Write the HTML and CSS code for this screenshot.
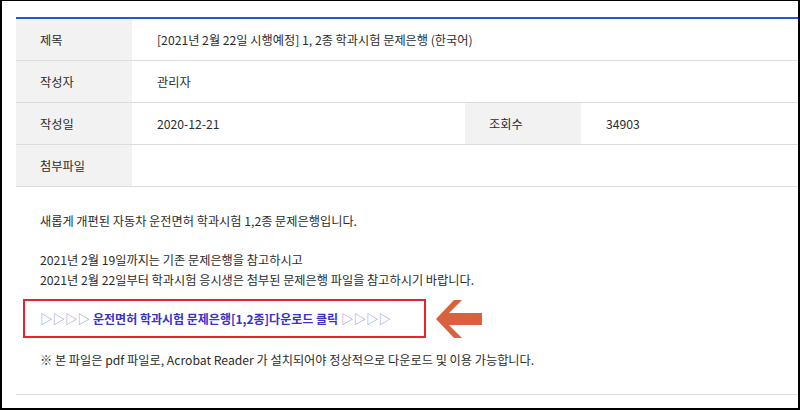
FILE: index.html
```html
<!DOCTYPE html>
<html>
<head>
	<meta charset="utf-8">
	<link rel="stylesheet" href="styles.css">
</head>
<body>
	<div class="frame">
		<div class="board">
			<div class="row">
				<div class="label">제목</div>
				<div class="value">[2021년 2월 22일 시행예정] 1, 2종 학과시험 문제은행 (한국어)</div>
			</div>
			<div class="row">
				<div class="label">작성자</div>
				<div class="value">관리자</div>
			</div>
			<div class="row">
				<div class="label">작성일</div>
				<div class="value half">2020-12-21</div>
				<div class="label">조회수</div>
				<div class="value">34903</div>
			</div>
			<div class="row">
				<div class="label">첨부파일</div>
				<div class="value"></div>
			</div>
		</div>

		<div class="content">
			<p>새롭게 개편된 자동차 운전면허 학과시험 1,2종 문제은행입니다.</p>
			<p>2021년 2월 19일까지는 기존 문제은행을 참고하시고<br>2021년 2월 22일부터 학과시험 응시생은 첨부된 문제은행 파일을 참고하시기 바랍니다.</p>
			<div class="download">
				<div class="box">
					<span class="tri">▷▷▷▷</span> <b>운전면허 학과시험 문제은행[1,2종]다운로드 클릭</b> <span class="tri">▷▷▷▷</span>
				</div>
				<svg class="arrow" width="48" height="40" viewBox="0 0 48 40">
					<polygon points="1,20 19,1 27,1 14,14 47,14 47,26 14,26 27,39 19,39" fill="#d9623e"/>
				</svg>
			</div>
			<p class="note">※ 본 파일은 pdf 파일로, Acrobat Reader 가 설치되어야 정상적으로 다운로드 및 이용 가능합니다.</p>
		</div>
	</div>
</body>
</html>
```

FILE: styles.css
```css
:root {
	--line: #dcdcdc;
	--label-bg: #f2f2f2;
	--text: #2b2b2b;
	--blue: #1f5fc4;
}

body {
	margin: 0;
	background: #fff;
	color: var(--text);
	font-family: "Noto Sans CJK KR", "Noto Sans", sans-serif;
	font-size: 12.2px;
}

.frame {
	box-sizing: border-box;
	height: 410px;
	border: 2px solid #000;
	border-top-width: 1px;
	padding: 16px 0 0 14px;
}

.board {
	border-top: 2px solid var(--blue);
}

.row {
	display: flex;
	height: 41px;
	border-bottom: 1px solid var(--line);
}

.label {
	width: 116px;
	flex: none;
	box-sizing: border-box;
	padding-left: 24px;
	background: var(--label-bg);
	display: flex;
	align-items: center;
}

.value {
	flex: 1;
	padding-left: 25px;
	display: flex;
	align-items: center;
}

.value.half {
	flex: none;
	width: 308px;
}

.content {
	padding: 25px 0 0 7px;
	border-bottom: 1px solid var(--line);
	padding-bottom: 24px;
	line-height: 19.5px;
}

.content p {
	margin: 0 0 19.5px 17px;
}

.download {
	display: flex;
	align-items: center;
	gap: 9px;
	margin-top: -11px;
	margin-bottom: 12px;
}

.box {
	box-sizing: border-box;
	width: 403px;
	height: 39px;
	border: 2px solid #e8232b;
	padding: 1px 0 0 15px;
	display: flex;
	align-items: center;
	gap: 3px;
	color: #3a32c8;
	white-space: nowrap;
}

.box b {
	font-weight: bold;
	font-size: 12px;
}

.tri {
	color: #8e8ee0;
	font-size: 12.5px;
}

.content p.note {
	margin-bottom: 0;
}
```
